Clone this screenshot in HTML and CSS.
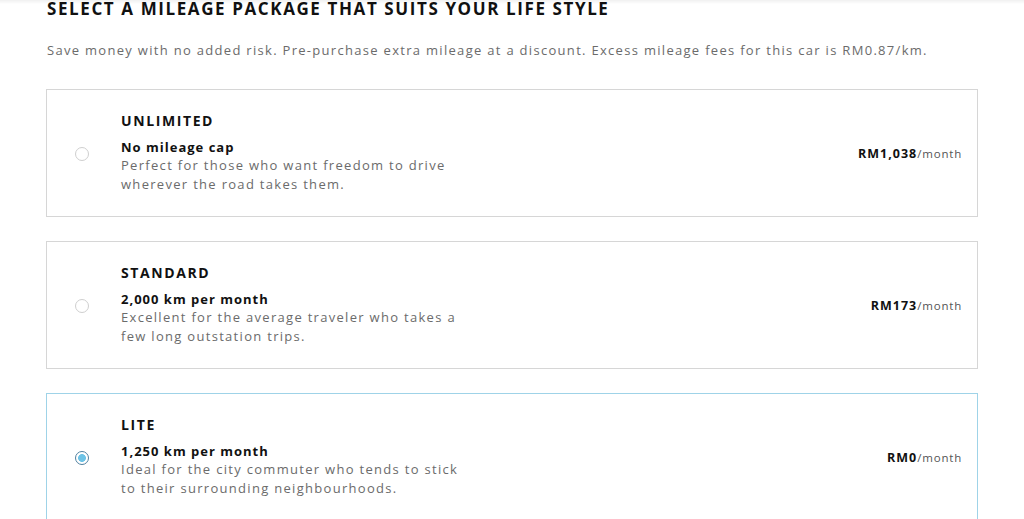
FILE: index.html
```html
<!DOCTYPE html>
<html lang="en">
<head>
<meta charset="utf-8">
<title>Mileage package</title>
<link rel="stylesheet" href="styles.css">
</head>
<body>
<div class="top-shade"></div>
<main class="page">
  <h2 class="heading">Select a mileage package that suits your life style</h2>
  <p class="intro">Save money with no added risk. Pre-purchase extra mileage at a discount. Excess mileage fees for this car is RM0.87/km.</p>

  <div class="options">
    <label class="option">
      <span class="radio"></span>
      <span class="info">
        <span class="title">Unlimited</span>
        <span class="subtitle">No mileage cap</span>
        <span class="desc">Perfect for those who want freedom to drive wherever the road takes them.</span>
      </span>
      <span class="price"><b>RM1,038</b>/month</span>
    </label>

    <label class="option">
      <span class="radio"></span>
      <span class="info">
        <span class="title">Standard</span>
        <span class="subtitle">2,000 km per month</span>
        <span class="desc">Excellent for the average traveler who takes a few long outstation trips.</span>
      </span>
      <span class="price"><b>RM173</b>/month</span>
    </label>

    <label class="option selected">
      <span class="radio"></span>
      <span class="info">
        <span class="title">Lite</span>
        <span class="subtitle">1,250 km per month</span>
        <span class="desc">Ideal for the city commuter who tends to stick to their surrounding neighbourhoods.</span>
      </span>
      <span class="price"><b>RM0</b>/month</span>
    </label>
  </div>
</main>
</body>
</html>
```

FILE: styles.css
```css
* { box-sizing: border-box; }

html, body {
  margin: 0;
  padding: 0;
  background: #ffffff;
  overflow: hidden;
}

body {
  font-family: "Open Sans", "Liberation Sans", sans-serif;
  color: #171a20;
}

.top-shade {
  position: fixed;
  top: 0;
  left: 0;
  right: 0;
  height: 4px;
  background: linear-gradient(to bottom, rgba(0,0,0,0.06), rgba(0,0,0,0));
}

.page {
  width: 932px;
  margin-left: 46px;
}

.heading {
  margin: 0;
  padding-left: 1px;
  font-size: 17px;
  line-height: 18px;
  font-weight: 700;
  letter-spacing: 1.6px;
  text-transform: uppercase;
  color: #111;
}

.intro {
  margin: 23px 0 0;
  padding-left: 1px;
  font-size: 13px;
  line-height: 18px;
  letter-spacing: 1.3px;
  color: #6b6b6b;
}

.options {
  margin-top: 30px;
  display: flex;
  flex-direction: column;
  gap: 24px;
}

.option {
  display: flex;
  align-items: center;
  height: 128px;
  border: 1px solid #d6d6d6;
  padding: 0 15px 0 28px;
  background: #fff;
}

.option.selected {
  border-color: #9fd3e8;
}

.radio {
  flex: none;
  width: 14px;
  height: 14px;
  border-radius: 50%;
  border: 1px solid #cfcfcf;
  background: #fff;
  margin-top: 2px;
}

.selected .radio {
  border: 1.5px solid #4f7f9f;
  background: radial-gradient(circle, #6ec3e6 0 3.6px, #ffffff 4.2px);
}

.info {
  display: flex;
  flex-direction: column;
  margin-left: 32px;
  max-width: 342px;
}

.title {
  font-size: 14px;
  line-height: 18px;
  font-weight: 700;
  letter-spacing: 1.6px;
  text-transform: uppercase;
  color: #111;
}

.subtitle {
  margin-top: 9px;
  font-size: 13px;
  line-height: 17px;
  font-weight: 700;
  letter-spacing: 1px;
  color: #111;
}

.desc {
  font-size: 13px;
  line-height: 19px;
  letter-spacing: 1.3px;
  color: #6b6b6b;
}

.price {
  margin-left: auto;
  font-size: 11.5px;
  letter-spacing: 0.8px;
  color: #555;
}

.price b {
  font-size: 12.5px;
  font-weight: 700;
  letter-spacing: 1px;
  color: #111;
}
```
